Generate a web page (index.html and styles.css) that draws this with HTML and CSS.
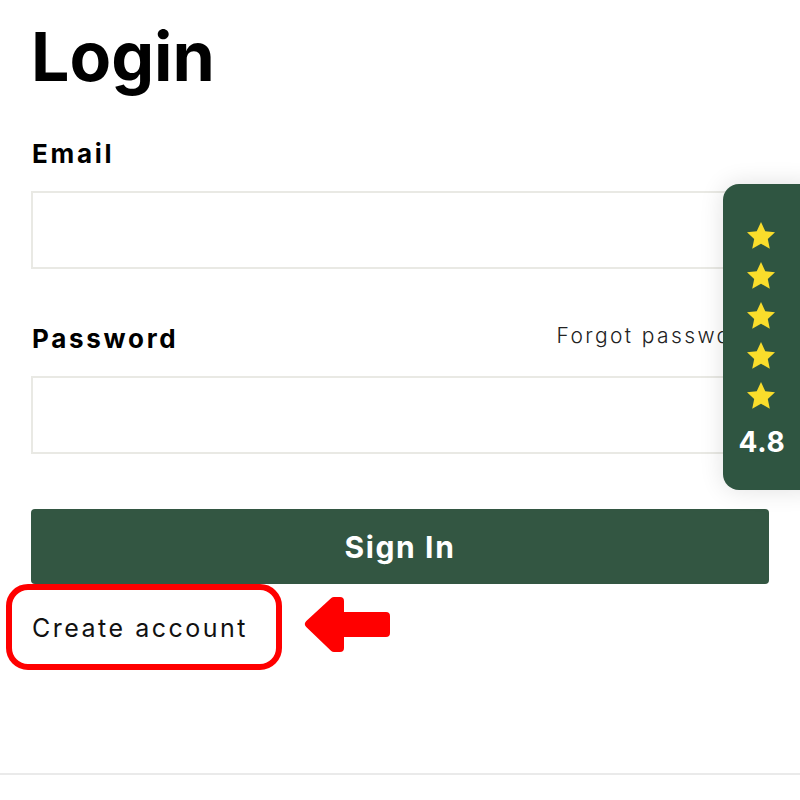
FILE: index.html
```html
<!DOCTYPE html>
<html lang="en">

<head>
    <meta charset="UTF-8">
    <meta name="viewport" content="width=device-width, initial-scale=1.0">
    <title>Login</title>
    <link rel="stylesheet" href="styles.css">
</head>

<body>
    <div class="login-page">
        <h1 class="login-title">Login</h1>

        <div class="field">
            <label class="field-label" for="email">Email</label>
            <input class="field-input" id="email" type="email">
        </div>

        <div class="field">
            <div class="field-head">
                <label class="field-label" for="password">Password</label>
                <a class="forgot-link" href="#">Forgot password?</a>
            </div>
            <input class="field-input" id="password" type="password">
        </div>

        <button class="sign-in-btn">Sign In</button>

        <div class="create-row">
            <a class="create-link" href="#">Create account</a>
            <svg class="red-arrow" width="90" height="60" viewBox="0 0 90 60">
                <polygon points="7,29 32,6 38,6 38,21 84,21 84,38 38,38 38,53 32,53" fill="#ff0000" stroke="#ff0000" stroke-width="8" stroke-linejoin="round"/>
            </svg>
        </div>
    </div>

    <div class="bottom-line"></div>

    <!-- reviews badge floating on the right edge -->
    <div class="rating-badge">
        <div class="stars">
            <svg class="star" viewBox="0 0 24 24"><path d="M12 1.5l3.2 6.9 7.3.8-5.4 5 1.5 7.3L12 17.8l-6.6 3.7 1.5-7.3-5.4-5 7.3-.8z"/></svg>
            <svg class="star" viewBox="0 0 24 24"><path d="M12 1.5l3.2 6.9 7.3.8-5.4 5 1.5 7.3L12 17.8l-6.6 3.7 1.5-7.3-5.4-5 7.3-.8z"/></svg>
            <svg class="star" viewBox="0 0 24 24"><path d="M12 1.5l3.2 6.9 7.3.8-5.4 5 1.5 7.3L12 17.8l-6.6 3.7 1.5-7.3-5.4-5 7.3-.8z"/></svg>
            <svg class="star" viewBox="0 0 24 24"><path d="M12 1.5l3.2 6.9 7.3.8-5.4 5 1.5 7.3L12 17.8l-6.6 3.7 1.5-7.3-5.4-5 7.3-.8z"/></svg>
            <svg class="star" viewBox="0 0 24 24"><path d="M12 1.5l3.2 6.9 7.3.8-5.4 5 1.5 7.3L12 17.8l-6.6 3.7 1.5-7.3-5.4-5 7.3-.8z"/></svg>
        </div>
        <p class="rating-value">4.8</p>
    </div>
</body>

</html>
```

FILE: styles.css
```css
body {
    margin: 0;
    background-color: white;
    font-family: Inter, "Noto Sans", sans-serif;
    color: black;
}

.login-page {
    padding: 0 31px;
}

.login-title {
    margin: 0;
    padding-top: 18px;
    font-size: 68px;
    font-weight: 700;
    line-height: 76px;
    letter-spacing: 0;
}

.field {
    margin-top: 55px;
}

.login-title + .field {
    margin-top: 45px;
}

.field-head {
    display: flex;
    justify-content: space-between;
    align-items: center;
}

.field-label {
    display: block;
    font-size: 26px;
    font-weight: 700;
    letter-spacing: 2.7px;
    line-height: 30px;
    padding-left: 1px;
}

.forgot-link {
    margin-top: -8px;
    font-size: 21px;
    font-weight: 300;
    letter-spacing: 2.4px;
    color: #222;
    text-decoration: none;
}

.field-input {
    display: block;
    box-sizing: border-box;
    width: 100%;
    height: 78px;
    margin-top: 22px;
    border: 2px solid #e9e9e4;
    border-radius: 0;
    outline: none;
}

.sign-in-btn {
    display: block;
    width: 100%;
    height: 75px;
    margin-top: 55px;
    border: none;
    border-radius: 4px;
    background-color: #335642;
    color: white;
    font-family: Inter, "Noto Sans", sans-serif;
    font-size: 30px;
    font-weight: 700;
    letter-spacing: 1.6px;
    cursor: pointer;
}

.create-row {
    display: flex;
    align-items: center;
    gap: 20px;
    margin-left: -25px;
    margin-top: 0;
}

.create-link {
    display: block;
    padding: 23px 28px 21px 20px;
    border: 6px solid #ff0000;
    border-radius: 22px;
    font-size: 25px;
    font-weight: 400;
    letter-spacing: 2.5px;
    color: #111;
    text-decoration: none;
}

.red-arrow {
    display: block;
    margin-top: -4px;
}

.bottom-line {
    margin-top: 103px;
    border-top: 2px solid #eaeaea;
}

.rating-badge {
    position: absolute;
    top: 184px;
    left: 723px;
    width: 100px;
    height: 306px;
    border-radius: 16px;
    background-color: #2f5541;
    box-shadow: 0 0 24px rgba(0, 0, 0, 0.12);
}

.stars {
    display: flex;
    flex-direction: column;
    align-items: center;
    gap: 8px;
    width: 76px;
    padding-top: 36px;
}

.star {
    width: 32px;
    height: 32px;
    fill: #fadd2b;
}

.rating-value {
    width: 78px;
    margin: 13px 0 0;
    text-align: center;
    color: white;
    font-size: 28px;
    font-weight: 700;
    letter-spacing: 0.8px;
}
```
